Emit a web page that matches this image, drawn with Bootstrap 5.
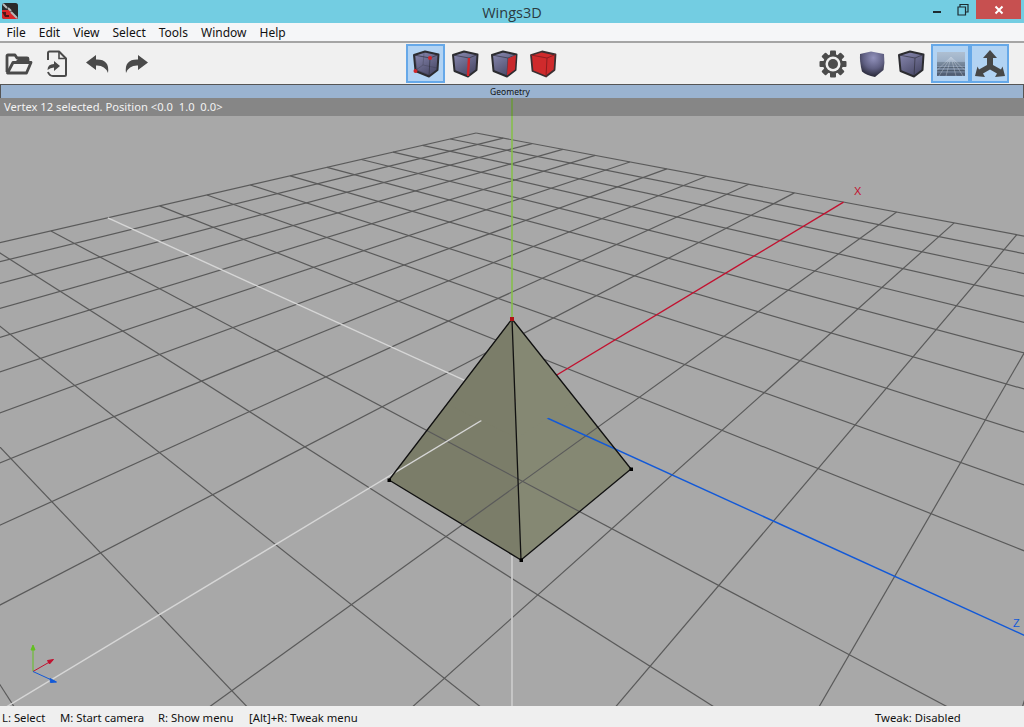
<!DOCTYPE html>
<html lang="en">
<head>
  <meta charset="UTF-8" />
  <meta name="viewport" content="width=device-width, initial-scale=1" />
  <title>Wings3D</title>
  <link href="https://cdn.jsdelivr.net/npm/bootstrap@5.3.3/dist/css/bootstrap.min.css" rel="stylesheet" />
  <style>
    body { width: 1024px; height: 727px; overflow: hidden; font-family: "Noto Sans", "Liberation Sans", sans-serif; background: #f0f0f0; color: #111; }
    .app-shell { height: 727px; }
    .title-bar { height: 23px; background: #73cde2; }
    .title-logo { left: 2px; top: 3px; }
    .title-text { font-family: "Open Sans", sans-serif; font-size: 14.5px; line-height: 19px; color: #2b3a40; }
    .win-btns { right: 3px; top: 0; }
    .win-close { width: 45px; height: 19px; background: #c75050; }
    .win-ctl { width: 26px; height: 19px; }
    .menu-bar { height: 20px; background: #f5f6f8; border-bottom: 2px solid #a5a5a5; font-size: 12px; line-height: 19px; }
    .menu-bar span { padding: 0 6.5px; }
    .tool-bar { height: 41px; background: #f0f0f0; padding-top: 1px; }
    .tb-left { width: 406px; padding-left: 5px; gap: 12px; }
    .tb-mid { width: 401px; }
    .tb-right { padding-left: 6px; }
    .tool-btn { width: 39px; height: 39px; border: 1px solid transparent; }
    .tool-btn.on { background: #b2d3f3; border: 2px solid #66a8e8; }
    .plane-btn { margin-left: 1px; }
    .geo-bar { height: 14px; background: #9ab3d0; border: 1px solid #555; border-bottom: 0; font-size: 8.5px; line-height: 13px; color: #111; padding-right: 4px; }
    .scene { height: 608px; background: #a8a8a8; }
    .scene svg { display: block; }
    .sel-info { top: 0; left: 0; right: 0; height: 18px; background: rgba(0, 0, 0, .2); color: #f2f2f2; font-size: 11.2px; line-height: 18px; padding-left: 4px; white-space: pre; }
    .info-bar { height: 21px; background: #efefef; font-size: 11.3px; line-height: 24px; white-space: pre; }
    .hint-a { width: 60px; padding-left: 2px; }
    .hint-b { width: 98px; }
    .hint-c { width: 91px; }
    .hint-d { width: 626px; }
  </style>
</head>
<body>

<svg width="0" height="0" class="d-block">
  <defs>
    <linearGradient id="faceFill" x1="0" y1="0" x2="0.6" y2="1">
      <stop offset="0" stop-color="#8c8cb4" />
      <stop offset="1" stop-color="#4a4a68" />
    </linearGradient>
    <radialGradient id="smoothFill" cx="0.55" cy="0.25" r="0.85">
      <stop offset="0" stop-color="#9292bc" />
      <stop offset="0.5" stop-color="#5f5f82" />
      <stop offset="1" stop-color="#15151d" />
    </radialGradient>
    <linearGradient id="planeFill" x1="0" y1="0" x2="0" y2="1">
      <stop offset="0" stop-color="#aebfd2" />
      <stop offset="0.35" stop-color="#9fb2c8" />
      <stop offset="1" stop-color="#55637a" />
    </linearGradient>
    <symbol id="cubeBody" viewBox="0 0 28 28">
      <path d="M2 5 13 1.5 26.5 4.5 25.5 20 17 26.5 3.5 21Z" fill="url(#faceFill)" stroke="#2c2c30" stroke-width="2" stroke-linejoin="round" />
      <path d="M2 5 18 8 26.5 4.5M18 8 17 26.5" fill="none" stroke="#2c2c38" stroke-width="0.9" opacity=".7" />
    </symbol>
  </defs>
</svg>

<div class="app-shell d-flex flex-column">

  <div class="title-bar position-relative text-center flex-shrink-0">
    <svg class="title-logo position-absolute" width="16" height="16" viewBox="0 0 16 16">
      <rect width="16" height="16" rx="2.5" fill="#2a2a2a" />
      <path d="M0 7H7L11 12 16 16H2.5Q0 16 0 13.5Z" fill="#d9262a" />
      <path d="M1 1 5 5M6 5 9 8M9 9 12 12M12 12 15 15" stroke="#b8b8b8" stroke-width="2" />
      <path d="M0 9H4V12H7V14H3Z" fill="#111" opacity=".7" />
    </svg>
    <span class="title-text">Wings3D</span>
    <div class="win-btns position-absolute d-flex">
      <div class="win-ctl d-flex align-items-center justify-content-center">
        <svg width="10" height="10" viewBox="0 0 10 10"><rect x="1" y="6" width="8" height="2" fill="#1d2b30" /></svg>
      </div>
      <div class="win-ctl d-flex align-items-center justify-content-center">
        <svg width="12" height="12" viewBox="0 0 12 12"><path d="M3 2.5V.5H11V8H9M1 3H8.5V11H1Z" fill="none" stroke="#1d2b30" stroke-width="1.2" /></svg>
      </div>
      <div class="win-close d-flex align-items-center justify-content-center">
        <svg width="10" height="10" viewBox="0 0 10 10"><path d="M1.5 1.5 8.5 8.5M8.5 1.5 1.5 8.5" stroke="#fff" stroke-width="2" /></svg>
      </div>
    </div>
  </div>

  <div class="menu-bar d-flex flex-shrink-0">
    <span>File</span><span>Edit</span><span>View</span><span>Select</span><span>Tools</span><span>Window</span><span>Help</span>
  </div>

  <div class="tool-bar d-flex flex-shrink-0">
    <div class="tb-left d-flex align-items-center">
      <svg width="28" height="24" viewBox="0 0 28 24">
        <path d="M2 20V4Q2 3 3 3H10L12 6H22Q23 6 23 7V9" fill="none" stroke="#4a4a4a" stroke-width="2.8" stroke-linejoin="round" />
        <path d="M2 9H11L13 7H22V9H8Z" fill="#4a4a4a" />
        <path d="M8 10.5H26L21.5 21H2.5Z" fill="none" stroke="#4a4a4a" stroke-width="2.8" stroke-linejoin="round" />
      </svg>
      <svg width="24" height="28" viewBox="0 0 24 28">
        <path d="M3 10V3Q3 1.5 4.500 1.500H14L21 8.500V24.500Q21 26 19.500 26H8" fill="none" stroke="#4a4a4a" stroke-width="2" stroke-linejoin="round" />
        <path d="M14 2V8.500H21" fill="none" stroke="#4a4a4a" stroke-width="1.600" />
        <path d="M2.500 20Q2.500 14 9 14V11L15 16 9 21V17.500Q5.500 17.500 2.500 20Z" fill="#4a4a4a" />
        <path d="M3 22Q4.500 26 8 26" fill="none" stroke="#4a4a4a" stroke-width="2" />
      </svg>
      <svg width="26" height="20" viewBox="0 0 26 20" class="ms-1">
        <path d="M11 1 1 8.500 11 16V11.500Q20 11 23 19Q25 5 11 5.500Z" fill="#4a4a4a" />
      </svg>
      <svg width="26" height="20" viewBox="0 0 26 20">
        <path d="M15 1 25 8.500 15 16V11.500Q6 11 3 19Q1 5 15 5.500Z" fill="#4a4a4a" />
      </svg>
    </div>

    <div class="tb-mid d-flex">
      <div class="tool-btn on d-flex align-items-center justify-content-center">
        <svg width="28" height="28" viewBox="0 0 28 28">
          <use href="#cubeBody" />
          <circle cx="18" cy="8" r="2" fill="#d2252a" />
          <circle cx="3.500" cy="21" r="2" fill="#d2252a" />
          <path d="M3 5 5 20M5 20 17 25M12 3 11 15M11 15 4 20M11 15 25 18" stroke="#2c2c38" stroke-width=".6" opacity=".45" fill="none" />
        </svg>
      </div>
      <div class="tool-btn d-flex align-items-center justify-content-center">
        <svg width="28" height="28" viewBox="0 0 28 28">
          <use href="#cubeBody" />
          <path d="M18 8 17 26" stroke="#d2252a" stroke-width="2.400" />
        </svg>
      </div>
      <div class="tool-btn d-flex align-items-center justify-content-center">
        <svg width="28" height="28" viewBox="0 0 28 28">
          <use href="#cubeBody" />
          <path d="M18 8.500 26 5 25 19.500 17 25.500Z" fill="#c9282c" />
        </svg>
      </div>
      <div class="tool-btn d-flex align-items-center justify-content-center">
        <svg width="28" height="28" viewBox="0 0 28 28">
          <path d="M2 5 13 1.500 26.500 4.500 25.500 20 17 26.500 3.500 21Z" fill="#cf2a2c" stroke="#3a3032" stroke-width="1.800" stroke-linejoin="round" />
          <path d="M2 5 18 8 26.500 4.500M18 8 17 26.500" fill="none" stroke="#8e1d20" stroke-width="1" />
        </svg>
      </div>
    </div>

    <div class="tb-right d-flex">
      <div class="tool-btn d-flex align-items-center justify-content-center">
        <svg width="28" height="28" viewBox="0 0 28 28">
          <g fill="#4c4c4c">
            <rect x="11" y="0.500" width="6" height="27" rx="1" />
            <rect x="11" y="0.500" width="6" height="27" rx="1" transform="rotate(45 14 14)" />
            <rect x="11" y="0.500" width="6" height="27" rx="1" transform="rotate(90 14 14)" />
            <rect x="11" y="0.500" width="6" height="27" rx="1" transform="rotate(135 14 14)" />
          </g>
          <circle cx="14" cy="14" r="10" fill="#4c4c4c" />
          <circle cx="14" cy="14" r="7.500" fill="#f0f0f0" />
          <circle cx="14" cy="14" r="5" fill="#4c4c4c" />
        </svg>
      </div>
      <div class="tool-btn d-flex align-items-center justify-content-center">
        <svg width="28" height="28" viewBox="0 0 28 28">
          <path d="M2 4 13 1.500 26 4Q27 13 25.500 20L17 27Q8 25 4 21.500Q1.500 12 2 4Z" fill="url(#smoothFill)" />
        </svg>
      </div>
      <div class="tool-btn d-flex align-items-center justify-content-center">
        <svg width="28" height="28" viewBox="0 0 28 28">
          <use href="#cubeBody" />
        </svg>
      </div>
      <div class="tool-btn plane-btn on d-flex align-items-center justify-content-center">
        <svg width="28" height="24" viewBox="0 0 28 24">
          <rect width="28" height="24" fill="url(#planeFill)" />
          <path d="M0 11H28M0 13H28M0 15.500H28M0 18.500H28M0 22H28" stroke="#2f3a47" stroke-width=".9" opacity=".55" />
          <path d="M14 5 -6 24M14 5 2 24M14 5 9 24M14 5 19 24M14 5 26 24M14 5 34 24" stroke="#e8eef4" stroke-width=".8" opacity=".4" />
        </svg>
      </div>
      <div class="tool-btn on d-flex align-items-center justify-content-center">
        <svg width="30" height="28" viewBox="0 0 30 28">
          <path d="M15 0 22 8H18V15L26 19.500 27.500 16.500 30 26 20 27 22 23.500 15 19.500 8 23.500 10 27 0 26 2.500 16.500 4 19.500 12 15V8H8Z" fill="#474747" />
        </svg>
      </div>
    </div>
  </div>

  <div class="geo-bar text-center flex-shrink-0">Geometry</div>

  <div class="scene position-relative flex-shrink-0">
    <svg id="view3d" width="1024" height="608" viewBox="0 98 1024 608" xmlns="http://www.w3.org/2000/svg">
      <polygon points="512,319 389,480 521,560" fill="#7b7d69" />
      <polygon points="512,319 631,469 521,560" fill="#858873" />
      <g id="gridLines" stroke="#5a5a5a" stroke-width="1.200"></g>
      <g id="axisLines" stroke-width="1.400"></g>
      <line x1="512" y1="555" x2="512" y2="706" stroke="#c9c9c9" stroke-width="1.800" />
      <line x1="512" y1="98" x2="512" y2="319" stroke="#86bf4c" stroke-width="1.600" />
      <polygon points="512,319 447,404 517,438" fill="#7b7d69" />
      <polygon points="512,319 517,438 576,400" fill="#858873" />
      <path d="M512 319 389 480 521 560 631 469ZM512 319 521 560" fill="none" stroke="#111" stroke-width="1.300" stroke-linejoin="round" />
      <rect x="387.500" y="478.500" width="3.500" height="3.500" fill="#000" />
      <rect x="519.500" y="558.500" width="3.500" height="3.500" fill="#000" />
      <rect x="629.500" y="467.500" width="3.500" height="3.500" fill="#000" />
      <rect x="510" y="317" width="4" height="4" fill="#b01515" />
      <text x="854" y="195" font-family="Liberation Sans, sans-serif" font-size="11" fill="#c2112f">X</text>
      <text x="1013" y="627" font-family="Liberation Sans, sans-serif" font-size="11" fill="#1259d8">Z</text>
      <path d="M33 671.500V646M33 645 31 650H35Z" stroke="#62c020" fill="#62c020" />
      <path d="M33 671.500 53 660M53.500 659.500 47.500 660.500 49.500 664Z" stroke="#c2112f" fill="#c2112f" />
      <path d="M33 671.500 56 682M56.500 682 50 678.500 50.500 682.500Z" stroke="#1259d8" fill="#1259d8" />
    </svg>
    <div class="sel-info position-absolute">Vertex 12 selected. Position &lt;0.0  1.0  0.0&gt;</div>
  </div>

  <div class="info-bar d-flex flex-shrink-0">
    <div class="hint-a">L: Select</div>
    <div class="hint-b">M: Start camera</div>
    <div class="hint-c">R: Show menu</div>
    <div class="hint-d">[Alt]+R: Tweak menu</div>
    <div>Tweak: Disabled</div>
  </div>
</div>

<script>
  // ground plane projection fitted on the reference, u = world x, v = world z
  function project(u, v) {
    const w = 1 + 0.0804 * u - 0.0702 * v;
    return [512 + (59.8 * u + 68.8 * v) / w, 402 + (-36.06 * u + 31.34 * v) / w];
  }

  function addLine(parent, a, b, color) {
    const line = document.createElementNS('http://www.w3.org/2000/svg', 'line');
    line.setAttribute('x1', a[0].toFixed(1));
    line.setAttribute('y1', a[1].toFixed(1));
    line.setAttribute('x2', b[0].toFixed(1));
    line.setAttribute('y2', b[1].toFixed(1));
    if (color) line.setAttribute('stroke', color);
    parent.appendChild(line);
  }

  // walk in small steps so lines running behind the camera get cut off
  function drawSpan(parent, fn, from, to, color) {
    let first = null, last = null;
    for (let t = from; t <= to + 0.001; t += 0.05) {
      const [u, v] = fn(t);
      if (1 + 0.0804 * u - 0.0702 * v > 0.1) {
        if (!first) first = [u, v];
        last = [u, v];
      }
    }
    if (first) addLine(parent, project(first[0], first[1]), project(last[0], last[1]), color);
  }

  const gridLines = document.getElementById('gridLines');
  const axisLines = document.getElementById('axisLines');
  for (let i = -10; i <= 10; i++) {
    if (i === 0) continue;
    drawSpan(gridLines, t => [i, t], -10, 10);
    drawSpan(gridLines, t => [t, i], -10, 10);
  }
  drawSpan(axisLines, t => [t, 0], 0, 10, '#c2112f');
  drawSpan(axisLines, t => [-t, 0], 0, 10, '#d6d6d6');
  drawSpan(axisLines, t => [0, t], 0, 10, '#1259d8');
  drawSpan(axisLines, t => [0, -t], 0, 10, '#d6d6d6');
</script>

<script src="https://cdn.jsdelivr.net/npm/bootstrap@5.3.3/dist/js/bootstrap.bundle.min.js"></script>
</body>
</html>
